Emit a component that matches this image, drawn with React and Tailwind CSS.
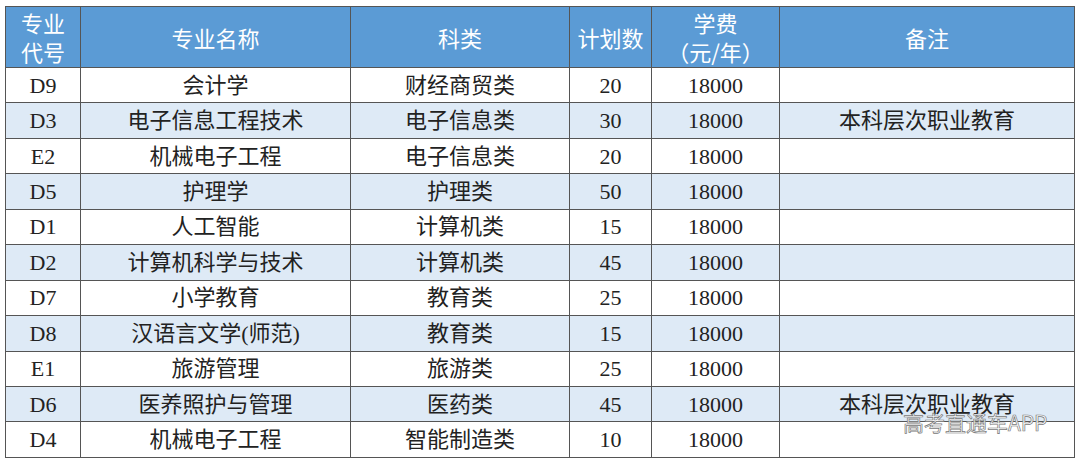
import React from 'react';

const rows = [
    ['D9', '会计学', '财经商贸类', '20', '18000', ''],
    ['D3', '电子信息工程技术', '电子信息类', '30', '18000', '本科层次职业教育'],
    ['E2', '机械电子工程', '电子信息类', '20', '18000', ''],
    ['D5', '护理学', '护理类', '50', '18000', ''],
    ['D1', '人工智能', '计算机类', '15', '18000', ''],
    ['D2', '计算机科学与技术', '计算机类', '45', '18000', ''],
    ['D7', '小学教育', '教育类', '25', '18000', ''],
    ['D8', '汉语言文学(师范)', '教育类', '15', '18000', ''],
    ['E1', '旅游管理', '旅游类', '25', '18000', ''],
    ['D6', '医养照护与管理', '医药类', '45', '18000', '本科层次职业教育'],
    ['D4', '机械电子工程', '智能制造类', '10', '18000', ''],
];

const grid = 'grid grid-cols-[75px_270px_219px_82px_128px_295px]';
const head = 'flex items-center justify-center text-center border-r border-b border-[#555]';

export default function App() {
    return (
        <div className="relative w-[1080px] h-[462px] bg-white pt-[6px] pl-[5px]">
            <div className="w-[1070px] border-l border-t border-[#555]">
                <div className={`${grid} h-[61px] bg-[#5b9bd5] text-white text-[22px] leading-[29px] font-['Noto_Sans_CJK_SC',sans-serif]`}>
                    <div className={head}><div>专业<br />代号</div></div>
                    <div className={head}>专业名称</div>
                    <div className={head}>科类</div>
                    <div className={head}>计划数</div>
                    <div className={head}><div>学费<br />（元/年）</div></div>
                    <div className={head}>备注</div>
                </div>
                {rows.map((r, i) => (
                    <div
                        key={i}
                        className={`${grid} h-[35.45px] text-[22px] text-[#222] font-['Liberation_Serif','Noto_Sans_CJK_SC',serif] ${i % 2 === 1 ? 'bg-[#deeaf6]' : 'bg-white'}`}
                    >
                        {r.map((c, j) => (
                            <div key={j} className="flex items-center justify-center border-r border-b border-[#555] whitespace-nowrap">{c}</div>
                        ))}
                    </div>
                ))}
            </div>
            <div className="absolute left-[903px] top-[408px] text-[21px] leading-[28px] text-white font-['Noto_Sans_CJK_SC',sans-serif] [-webkit-text-stroke:0.7px_#777]">
                高考直通车APP
            </div>
        </div>
    );
}
